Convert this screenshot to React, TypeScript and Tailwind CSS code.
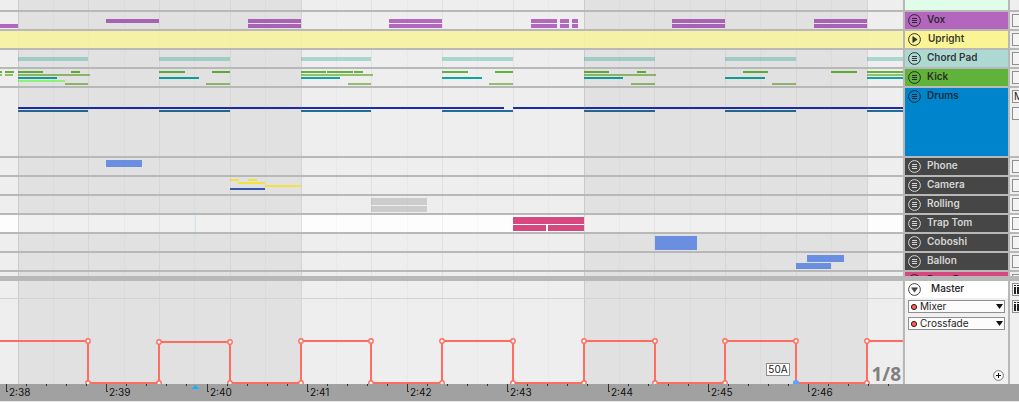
import React from "react";

type Clip = [x: number, y: number, w: number, h: number, fill: string];

const PURPLE = "#b268be";
const MINT = "#aad6d0";
const GREEN = "#60b43a";
const OLIVE = "#94bd6c";
const TEAL = "#0ea49f";
const NAVY = "#1d2da8";
const STEEL = "#246a9a";
const BLUE = "#7097ec";
const YELLOW = "#ffee42";
const PINK = "#d6487f";
const SILVER = "#cccccc";

const both = (x: number, w: number): Clip[] => [
  [x, 7, w, 4, PURPLE],
  [x, 12, w, 4, PURPLE],
];

const line = (y: number, h: number, fill: string, spans: [number, number][]): Clip[] =>
  spans.map(([a, b]) => [a, y, b - a, h, fill]);

const BARS: [number, number][] = [
  [18, 88], [159, 230], [301, 371], [442, 513], [584, 655], [725, 796], [867, 938],
];

type Track = {
  name: string;
  height: string;
  color: string;
  ink: string;
  lane?: string;
  tint?: string;
  play?: boolean;
  clips: Clip[];
  boxes?: string[];
};

const DARK_INK = "text-[#1f1f1f]/90";
const LIGHT_INK = "text-[#d6d6d6]";
const LANE = "bg-[#eeeeee]";

const tracks: Track[] = [
  {
    name: "Vox", height: "h-[17px]", color: "bg-[#b366bd]", ink: DARK_INK,
    clips: [
      [0, 12, 18, 4, PURPLE], [106, 7, 53, 4, PURPLE],
      ...both(248, 53), ...both(389, 53), ...both(531, 26), ...both(560, 9),
      ...both(572, 6), ...both(672, 53), ...both(814, 53),
    ],
  },
  { name: "Upright", height: "h-[17px]", color: "bg-[#faf495]", ink: DARK_INK, play: true, tint: "#f7f39d", clips: [] },
  { name: "Chord Pad", height: "h-[17px]", color: "bg-[#aed8d2]", ink: DARK_INK, clips: line(7, 4, MINT, BARS) },
  {
    name: "Kick", height: "h-[17px]", color: "bg-[#61b23a]", ink: DARK_INK,
    clips: [
      ...line(2, 2, GREEN, [
        [0, 2], [5, 14], [18, 43], [71, 80], [159, 185], [212, 230], [301, 326], [327, 353], [354, 363],
        [442, 468], [495, 513], [584, 609], [637, 646], [743, 768], [831, 857], [867, 920],
      ]),
      ...line(5, 2, OLIVE, [[0, 2], [5, 13], [18, 90], [301, 373], [584, 656], [867, 939]]),
      ...line(8, 2, TEAL, [[18, 57], [159, 199], [301, 340], [442, 482], [584, 623], [725, 765], [867, 906]]),
      ...line(11, 2, "#96ff7d", [[18, 65]]),
      ...line(14, 2, OLIVE, [[65, 88], [206, 230], [348, 371], [489, 513], [631, 655], [772, 796]]),
    ],
  },
  {
    name: "Drums", height: "h-[68px]", color: "bg-[#0084cc]", ink: DARK_INK, boxes: ["M", ""],
    clips: [...line(19, 2, NAVY, [[18, 504], [513, 4000]]), ...line(22, 2, STEEL, BARS)],
  },
  { name: "Phone", height: "h-[17px]", color: "bg-[#464646]", ink: LIGHT_INK, clips: [[106, 2, 36, 7, BLUE]] },
  {
    name: "Camera", height: "h-[17px]", color: "bg-[#464646]", ink: LIGHT_INK,
    clips: [
      ...line(2, 2, YELLOW, [[230, 239], [248, 257]]),
      ...line(5, 2, YELLOW, [[238, 265]]),
      ...line(8, 2, YELLOW, [[265, 301]]),
      ...line(11, 2, "#385cb8", [[230, 265]]),
    ],
  },
  { name: "Rolling", height: "h-[17px]", color: "bg-[#464646]", ink: LIGHT_INK, clips: [[371, 2, 56, 7, SILVER], [371, 10, 56, 6, SILVER]] },
  {
    name: "Trap Tom", height: "h-[17px]", color: "bg-[#464646]", ink: LIGHT_INK, lane: "bg-[#fdfdfd]",
    clips: [[513, 2, 71, 7, PINK], [513, 10, 33, 6, PINK], [548, 10, 36, 6, PINK]],
  },
  { name: "Coboshi", height: "h-[17px]", color: "bg-[#464646]", ink: LIGHT_INK, clips: [[655, 2, 42, 14, BLUE]] },
  { name: "Ballon", height: "h-[17px]", color: "bg-[#464646]", ink: LIGHT_INK, clips: [[807, 2, 37, 7, BLUE], [796, 10, 35, 6, BLUE]] },
];

const gridLines = Array.from({ length: 80 }, (_, n) => ({
  x: 18 + Math.floor((n * 283) / 8),
  alpha: n % 8 === 0 ? 0.24 : n % 2 === 0 ? 0.11 : 0.06,
}));

function Grid() {
  return (
    <g shapeRendering="crispEdges">
      {[18, 584, 1150, 1716].map((x) => (
        <rect key={x} x={x} y="0" width="283" height="200" fill="#000" opacity="0.05" />
      ))}
      {gridLines.map((g) => (
        <rect key={g.x} x={g.x} y="0" width="1" height="200" fill="#808080" opacity={g.alpha} />
      ))}
    </g>
  );
}

function Lane({ clips, bg = LANE, tint, cursor = false }: { clips: Clip[]; bg?: string; tint?: string; cursor?: boolean }) {
  return (
    <div className={`min-w-0 flex-1 overflow-hidden ${bg}`}>
      <svg className="block h-full w-full" aria-hidden="true">
        <g shapeRendering="crispEdges">
          {clips.map(([x, y, w, h, fill], i) => (
            <rect key={i} x={x} y={y} width={w} height={h} fill={fill} />
          ))}
        </g>
        <Grid />
        {tint && <rect x="0" y="0" width="100%" height="100%" fill={tint} opacity="0.88" />}
        {cursor && <rect x="195" y="0" width="1" height="17" fill="#cde7f2" shapeRendering="crispEdges" />}
      </svg>
    </div>
  );
}

function TrackIcon({ kind }: { kind: "list" | "play" | "fold" }) {
  return (
    <svg className="block size-[13px]" viewBox="0 0 13 13" fill="none" stroke="currentColor" aria-hidden="true">
      <circle cx="6.5" cy="6.5" r="5.9" />
      {kind === "list" && <path d="M4 4.5h5M4 6.5h5M4 8.5h5" />}
      {kind === "play" && <path d="M4.8 3.5v6L9.2 6.5z" fill="currentColor" strokeWidth="0.6" />}
      {kind === "fold" && <path d="M3.5 4.8h6L6.5 9.2z" fill="currentColor" strokeWidth="0.6" />}
    </svg>
  );
}

function Box({ label, name }: { label?: string; name: string }) {
  return (
    <button
      type="button"
      aria-label={name}
      className="block h-[13px] w-10 shrink-0 border border-[#8f8f8f] bg-[#f4f4f4] pl-px text-left text-[10px] leading-[11px] text-[#222]"
    >
      {label}
    </button>
  );
}

function TrackRow({ track }: { track: Track }) {
  return (
    <div className={`flex gap-[2px] ${track.height}`}>
      <Lane clips={track.clips} bg={track.lane} tint={track.tint} cursor={track.name === "Trap Tom"} />
      <div className={`flex w-[103px] shrink-0 items-start overflow-hidden ${track.color} ${track.ink}`}>
        <button type="button" aria-label={`Fold ${track.name}`} className="mt-[2px] ml-[3px]">
          <TrackIcon kind={track.play ? "play" : "list"} />
        </button>
        <span className={`text-[10px] leading-[14px] font-semibold whitespace-nowrap ${track.play ? "ml-[7px]" : "ml-[6px]"}`}>
          {track.name}
        </span>
      </div>
      <div className={`flex w-[9px] shrink-0 flex-col gap-1 overflow-hidden pt-[2px] pl-[2px] ${track.lane ?? LANE}`}>
        {(track.boxes ?? [""]).map((b, i) => (
          <Box key={i} label={b} name={`${track.name} input ${i + 1}`} />
        ))}
      </div>
    </div>
  );
}

const HIGH = 60;
const LOW = 102;
const steps = [88, 159, 230, 301, 371, 442, 513, 584, 655, 725, 796, 867];
const top = (i: number) => (i === 1 || i === 2 ? HIGH + 1 : HIGH);
const envelope =
  `M0 ${HIGH}` + steps.map((x, i) => (i % 2 === 0 ? `V${top(i)}H${x}V${LOW}` : `H${x}V${top(i)}`)).join("") + "H4000";

function MasterLane() {
  return (
    <div className="relative h-[103px] min-w-0 flex-1 overflow-hidden bg-[#eeeeee]">
      <svg className="block h-full w-full" aria-hidden="true">
        <Grid />
        <rect x="0" y="17" width="4000" height="1" fill="#d2d2d2" />
        <path d={envelope} fill="none" stroke="#ff6c60" strokeWidth="2" />
        {steps.map((x, i) => (
          <g key={x} stroke="#ff6c60" strokeWidth="1.4" fill="#fff">
            <circle cx={x} cy={top(i)} r="2.2" />
            {x === 796 ? <circle cx={x} cy={LOW} r="2.4" fill="#5aa5ff" stroke="#5aa5ff" /> : <circle cx={x} cy={LOW} r="2.2" />}
          </g>
        ))}
      </svg>
      <output className="absolute top-[82px] left-[766px] h-[13px] w-6 border border-[#8c8c8c] bg-white text-center text-[10px] leading-[11px] text-[#222]">
        50A
      </output>
      <span className="absolute right-[2px] bottom-0 font-['Open_Sans',sans-serif] text-[19px] leading-5 font-bold text-[#808080]">
        1/8
      </span>
    </div>
  );
}

function DeviceSelect({ label, value }: { label: string; value: string }) {
  return (
    <label className="relative block">
      <select
        aria-label={label}
        defaultValue={value}
        className="block h-[13px] w-full appearance-none rounded-none border border-[#8f8f8f] bg-[#fcfcfc] pl-[11px] text-[10px] leading-[11px] text-[#1c1c1c]"
      >
        <option>{value}</option>
      </select>
      <svg className="pointer-events-none absolute inset-0 h-full w-[10px]" aria-hidden="true">
        <circle cx="6" cy="7" r="2.6" fill="#ff5c50" stroke="#33201f" strokeWidth="1" />
      </svg>
      <svg className="pointer-events-none absolute top-1 right-[2px] h-[5px] w-[7px]" viewBox="0 0 7 5" aria-hidden="true">
        <path d="M0 0h7L3.5 5z" fill="#111" />
      </svg>
    </label>
  );
}

function MeterButton({ name }: { name: string }) {
  return (
    <button type="button" aria-label={name} className="block h-[13px] w-10 shrink-0 border border-[#8f8f8f] bg-[#f4f4f4]">
      <svg className="block h-[11px] w-9" aria-hidden="true" shapeRendering="crispEdges">
        <path d="M1 1h2v1h-2zM1 3h2v7h-2zM4 1h2v1h-2zM4 3h2v7h-2z" fill="#222" />
      </svg>
    </button>
  );
}

const seconds = ["2:38", "2:39", "2:40", "2:41", "2:42", "2:43", "2:44", "2:45", "2:46"];
const markX = (i: number) => 6 + Math.round(i * 100.25);

function Ruler() {
  return (
    <div className="relative h-[17px] overflow-hidden bg-[#a1a1a1]">
      <svg className="block h-full w-full" aria-hidden="true">
        <g shapeRendering="crispEdges" fill="#333">
          {seconds.map((s, i) => (
            <g key={s}>
              <path d={`M${markX(i)} 0h1v7h1v1h-2z`} />
              {[1, 2, 3, 4].map((k) => {
                const x = markX(i) + k * 20;
                return x < 900 ? <rect key={k} x={x} y="0" width="1" height="2" /> : null;
              })}
            </g>
          ))}
        </g>
        <path d="M191.5 5l4-4 4 4z" fill="#10b4ff" />
      </svg>
      {seconds.map((s, i) => (
        <span key={s} className="absolute top-0 text-[10px] leading-4 text-[#111]" style={{ left: markX(i) + 3 }}>
          {s}
        </span>
      ))}
    </div>
  );
}

export default function App() {
  return (
    <main className="w-full overflow-hidden bg-[#e0e0e0] pb-px font-['Inter',sans-serif]">
      <div className="bg-[#b8b8b8]">
        <div className="flex flex-col gap-[2px]">
          <div className="flex h-[10px] gap-[2px]">
            <Lane clips={[]} />
            <div className="w-[103px] shrink-0 bg-[#e0fde9]" />
            <div className="w-[9px] shrink-0 bg-[#eeeeee]" />
          </div>
          {tracks.map((t) => (
            <TrackRow key={t.name} track={t} />
          ))}
          <TrackRow track={{ name: "Drop Drum", height: "h-1", color: "bg-[#d6487f]", ink: DARK_INK, clips: [] }} />
        </div>
        <div className="mt-[5px] flex gap-[2px]">
          <MasterLane />
          <div className="flex w-[103px] shrink-0 flex-col bg-[#f0f0f0]">
            <div className="flex h-[17px] items-start bg-white text-[#222]">
              <button type="button" aria-label="Fold Master" className="mt-[2px] ml-[3px] text-[#444]">
                <TrackIcon kind="fold" />
              </button>
              <span className="ml-[10px] text-[10px] leading-[14px] font-medium">Master</span>
            </div>
            <div className="flex flex-col gap-1 px-[3px] pt-[2px]">
              <DeviceSelect label="Automation device" value="Mixer" />
              <DeviceSelect label="Automation parameter" value="Crossfade" />
            </div>
            <button type="button" aria-label="Add automation lane" className="mt-auto mr-1 mb-[3px] self-end">
              <svg className="block size-[11px]" viewBox="0 0 11 11" fill="none" aria-hidden="true">
                <circle cx="5.5" cy="5.5" r="4.9" stroke="#777" fill="#fafafa" />
                <path d="M5.5 3v5M3 5.5h5" stroke="#111" />
              </svg>
            </button>
          </div>
          <div className="flex w-[9px] shrink-0 flex-col gap-1 overflow-hidden bg-[#f0f0f0] pt-[2px] pl-[2px]">
            <MeterButton name="Master output" />
            <MeterButton name="Cue output" />
          </div>
        </div>
        <Ruler />
      </div>
    </main>
  );
}
